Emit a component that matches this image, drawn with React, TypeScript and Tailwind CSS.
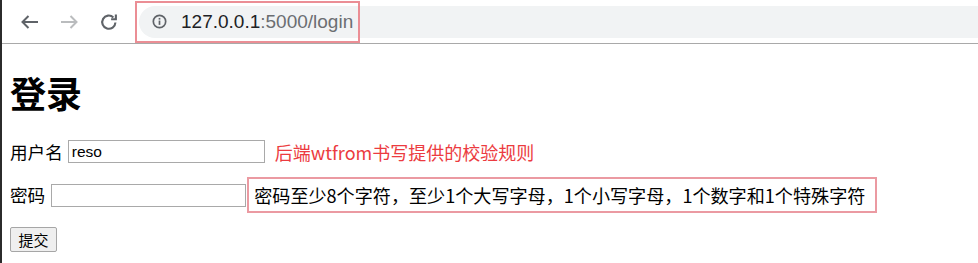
const cjk = '"Noto Sans CJK SC", "Liberation Sans", sans-serif';

function Toolbar() {
  return (
    <div className="relative flex h-[44px] items-center border-b border-[#a9a9a9] bg-white">
      <div className="flex w-[137px] shrink-0 items-center">
        <svg width="18" height="14" viewBox="0 0 18 14" className="ml-[19px]" fill="none" stroke="#5f6368" strokeWidth="2">
          <path d="M1.5 7H17M7.5 1L1.5 7l6 6" />
        </svg>
        <svg width="18" height="14" viewBox="0 0 18 14" className="ml-[21px]" fill="none" stroke="#babcbe" strokeWidth="2">
          <path d="M16.5 7H1M10.5 1l6 6-6 6" />
        </svg>
        <svg width="22" height="22" viewBox="0 0 24 24" className="ml-[20px]" fill="none" stroke="#5f6368" strokeWidth="2.3">
          <path d="M19 12.5A7.2 7.2 0 1 1 16.8 7" />
          <path d="M19.5 3.8v5.2h-5.2" />
        </svg>
      </div>
      <div className="flex h-[32px] flex-1 items-center rounded-l-full bg-[#f1f3f4] pl-[13px]">
        <svg width="15" height="15" viewBox="0 0 16 16" fill="none">
          <circle cx="8" cy="8" r="6.6" stroke="#5f6368" strokeWidth="1.8" />
          <rect x="7.1" y="7" width="1.8" height="4.6" fill="#5f6368" />
          <rect x="7.1" y="4.2" width="1.8" height="1.8" fill="#5f6368" />
        </svg>
        <span className="ml-[14px] text-[19px] leading-none" style={{ fontFamily: '"Liberation Sans", Arial, sans-serif' }}>
          <span className="text-[#202124]">127.0.0.1</span>
          <span className="text-[#6b6e72]">:5000/login</span>
        </span>
      </div>
      <div className="absolute left-[133px] top-[1px] h-[42px] w-[225px] border-2 border-[#eb8e95]" />
    </div>
  );
}

export default function App() {
  return (
    <div className="h-[263px] w-[978px] overflow-hidden border-l-2 border-[#2b2b2b] bg-white text-black" style={{ fontFamily: cjk }}>
      <Toolbar />
      <div className="px-[8px]">
        <h1 className="mt-[30px] text-[36px] font-bold leading-[37px]">登录</h1>
        <div className="mt-[29px] flex items-center text-[17.6px]">
          <span className="leading-none">用户名</span>
          <input
            defaultValue="reso"
            className="ml-[5px] h-[23px] w-[197px] border border-[#a9a9a9] px-[3px] text-[15.5px] outline-none"
            style={{ fontFamily: '"Liberation Sans", Arial, sans-serif' }}
          />
          <span className="ml-[10px] text-[18px] leading-none text-[#ec3b40]">后端wtfrom书写提供的校验规则</span>
        </div>
        <div className="mt-[14px] flex items-center text-[17.6px]">
          <span className="leading-none">密码</span>
          <input type="password" className="ml-[6px] h-[23px] w-[195px] border border-[#a9a9a9] outline-none" />
          <div className="ml-[1px] flex h-[36px] w-[630px] items-center border-2 border-[#eb9aa2] pl-[5px] text-[18.1px] leading-none">
            密码至少8个字符，至少1个大写字母，1个小写字母，1个数字和1个特殊字符
          </div>
        </div>
        <button className="mt-[14px] h-[25px] w-[47px] rounded-[2px] border border-[#a6a6a6] bg-[#efefef] text-[15px] leading-none">
          提交
        </button>
      </div>
    </div>
  );
}
